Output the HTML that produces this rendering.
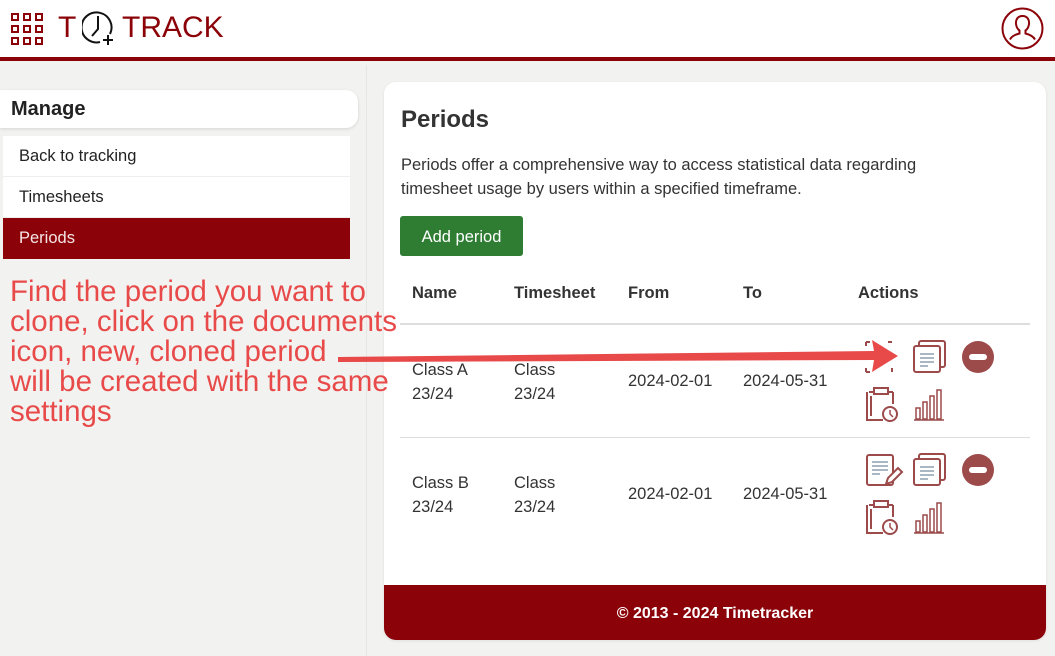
<!DOCTYPE html>
<html><head><meta charset="utf-8"><style>
*{box-sizing:border-box;margin:0;padding:0}
body{width:1055px;height:656px;overflow:hidden;background:#f2f2f0;font-family:"Liberation Sans",sans-serif;position:relative;color:#222}
.hdr{position:absolute;left:0;top:0;width:1055px;height:61px;background:#fff;border-bottom:4px solid #8b0309}
.side{position:absolute;left:0;top:65px;width:367px;height:591px;background:#f2f2f0;border-right:1px solid #e6e6e4}
.mg{position:absolute;left:0;top:90px;width:358px;height:38px;background:#fff;border-radius:0 12px 12px 0;box-shadow:0 1px 3px rgba(0,0,0,.12);font-weight:bold;font-size:20px;padding:8px 11px}
.it{position:absolute;left:3px;width:347px;height:41px;background:#fff;font-size:16.5px;padding:11px 16px;border-bottom:1px solid #eee}
.card{position:absolute;left:384px;top:82px;width:662px;height:558px;background:#fff;border-radius:12px;overflow:hidden;box-shadow:0 1px 3px rgba(0,0,0,.08)}
.ft{position:absolute;left:0;bottom:0;width:100%;height:55px;background:#8b0309;color:#fff;font-weight:bold;font-size:16px;text-align:center;line-height:58px}
.t{position:absolute;font-size:16.5px;color:#333}
.th{position:absolute;font-size:16.5px;font-weight:bold;color:#333;top:202px}
.ann{position:absolute;left:10px;top:277px;font-size:29.5px;line-height:30px;color:#e84a4a;white-space:nowrap}
</style></head><body>
<div class="hdr">
<svg style="position:absolute;left:10px;top:12px" width="34" height="34"><g fill="none" stroke="#8b0309" stroke-width="2"><rect x="2" y="2" width="6" height="6"/><rect x="14" y="2" width="6" height="6"/><rect x="26" y="2" width="6" height="6"/><rect x="2" y="14" width="6" height="6"/><rect x="14" y="14" width="6" height="6"/><rect x="26" y="14" width="6" height="6"/><rect x="2" y="26" width="6" height="6"/><rect x="14" y="26" width="6" height="6"/><rect x="26" y="26" width="6" height="6"/></g></svg>
<div style="position:absolute;left:58px;top:11px;font-size:30px;color:#8b0309">T</div>
<svg style="position:absolute;left:82px;top:10px" width="36" height="38"><path d="M28 24 A15 15 0 1 0 18 32" fill="none" stroke="#111" stroke-width="2"/><path d="M16 6 V19 L10 26" fill="none" stroke="#111" stroke-width="2"/><path d="M21 30 H31 M26 25 V35" stroke="#111" stroke-width="2"/></svg>
<div style="position:absolute;left:122px;top:11px;font-size:30px;color:#8b0309">TRACK</div>
<svg style="position:absolute;left:1001px;top:7px" width="43" height="43"><circle cx="21.5" cy="21.5" r="20" fill="none" stroke="#8b0309" stroke-width="2"/><path d="M21.5 9c-5 0-7 4-6.5 8 .4 3 2 5.5 3.5 6.5v3c-4 1-8 3-9.5 6M21.5 9c5 0 7 4 6.5 8-.4 3-2 5.5-3.5 6.5v3c4 1 8 3 9.5 6" fill="none" stroke="#8b0309" stroke-width="2"/></svg>
</div>
<div class="side"></div>
<div class="mg">Manage</div>
<div class="it" style="top:136px">Back to tracking</div>
<div class="it" style="top:177px">Timesheets</div>
<div class="it" style="top:218px;background:#8b0309;color:#f5e6e6;border:none">Periods</div>
<div class="card">
<div style="position:absolute;left:17px;top:24px;font-size:24px;font-weight:bold;color:#333">Periods</div>
<div class="t" style="left:17px;top:71px;line-height:24px;width:580px">Periods offer a comprehensive way to access statistical data regarding timesheet usage by users within a specified timeframe.</div>
<div style="position:absolute;left:16px;top:134px;width:123px;height:40px;background:#2e7d32;color:#fff;border-radius:3px;font-size:16.5px;text-align:center;line-height:42px">Add period</div>
<div class="th" style="left:28px">Name</div><div class="th" style="left:130px">Timesheet</div><div class="th" style="left:244px">From</div><div class="th" style="left:359px">To</div><div class="th" style="left:474px">Actions</div>
<div style="position:absolute;left:16px;top:241px;width:630px;border-top:2px solid #ddd"></div>
<div style="position:absolute;left:16px;top:355px;width:630px;border-top:1px solid #ddd"></div>
<div class="t" style="left:28px;top:276px;line-height:24px">Class A<br>23/24</div><div class="t" style="left:130px;top:276px;line-height:24px">Class<br>23/24</div><div class="t" style="left:244px;top:290px">2024-02-01</div><div class="t" style="left:359px;top:290px">2024-05-31</div>
<div class="t" style="left:28px;top:389px;line-height:24px">Class B<br>23/24</div><div class="t" style="left:130px;top:389px;line-height:24px">Class<br>23/24</div><div class="t" style="left:244px;top:403px">2024-02-01</div><div class="t" style="left:359px;top:403px">2024-05-31</div>
<div class="ft">© 2013 - 2024 Timetracker</div>
</div>
<svg style="position:absolute;left:0;top:0" width="1055" height="656">
<defs>
<g id="doc"><rect x="5" y="0" width="26" height="26" rx="2" fill="#fff" stroke="#9c4a4a" stroke-width="2"/><rect x="0" y="5" width="26" height="26" rx="2" fill="#fff" stroke="#9c4a4a" stroke-width="2"/><path d="M6 13h14M6 17h14M6 21h14M6 25h8" stroke="#a9b8c2" stroke-width="2"/></g>
<g id="min"><circle cx="16" cy="16" r="16" fill="#9c4a4a"/><rect x="7" y="13" width="18" height="6" rx="3" fill="#fff"/></g>
<g id="clip"><path d="M3 4h6M21 4h6" stroke="#9c4a4a" stroke-width="2"/><rect x="8" y="0" width="14" height="6" fill="none" stroke="#9c4a4a" stroke-width="2"/><path d="M17 32H1V4M5 28V8M27 4v12" fill="none" stroke="#9c4a4a" stroke-width="2"/><circle cx="24" cy="26" r="7" fill="#fff" stroke="#9c4a4a" stroke-width="2"/><path d="M24 22v4l3 3" fill="none" stroke="#9c4a4a" stroke-width="1.5"/></g>
<g id="bar" fill="none" stroke="#9c4a4a" stroke-width="1.5"><path d="M0 32h30"/><rect x="2" y="20" width="4" height="11"/><rect x="9" y="14" width="4" height="17"/><rect x="16" y="8" width="4" height="23"/><rect x="23" y="2" width="4" height="29"/></g>
<g id="edit"><rect x="1" y="1" width="26" height="30" rx="2" fill="#fff" stroke="#9c4a4a" stroke-width="2"/><path d="M6 8h16M6 12h16M6 16h16M6 20h8" stroke="#a9b8c2" stroke-width="2"/><path d="M20 30l2-6 10-10 4 4-10 10z" fill="#fff" stroke="#9c4a4a" stroke-width="2"/></g>
</defs>
<use href="#doc" x="914" y="341"/><use href="#min" x="962" y="341"/><use href="#clip" x="866" y="388"/><use href="#bar" x="914" y="388"/>
<path d="M866 342h4M866 342v4M892 342h-4M866 372h4M866 372v-4M892 372v-4" stroke="#9c4a4a" stroke-width="2"/>
<use href="#edit" x="866" y="454"/><use href="#doc" x="914" y="454"/><use href="#min" x="962" y="454"/><use href="#clip" x="866" y="501"/><use href="#bar" x="914" y="501"/>
<path d="M338 357 L874 351 L872 340 L898 356 L872 372 L874 360 L338 362 Z" fill="#e84a4a"/>
</svg>
<div class="ann">Find the period you want to<br>clone, click on the documents<br>icon, new, cloned period<br>will be created with the same<br>settings</div>
</body></html>
